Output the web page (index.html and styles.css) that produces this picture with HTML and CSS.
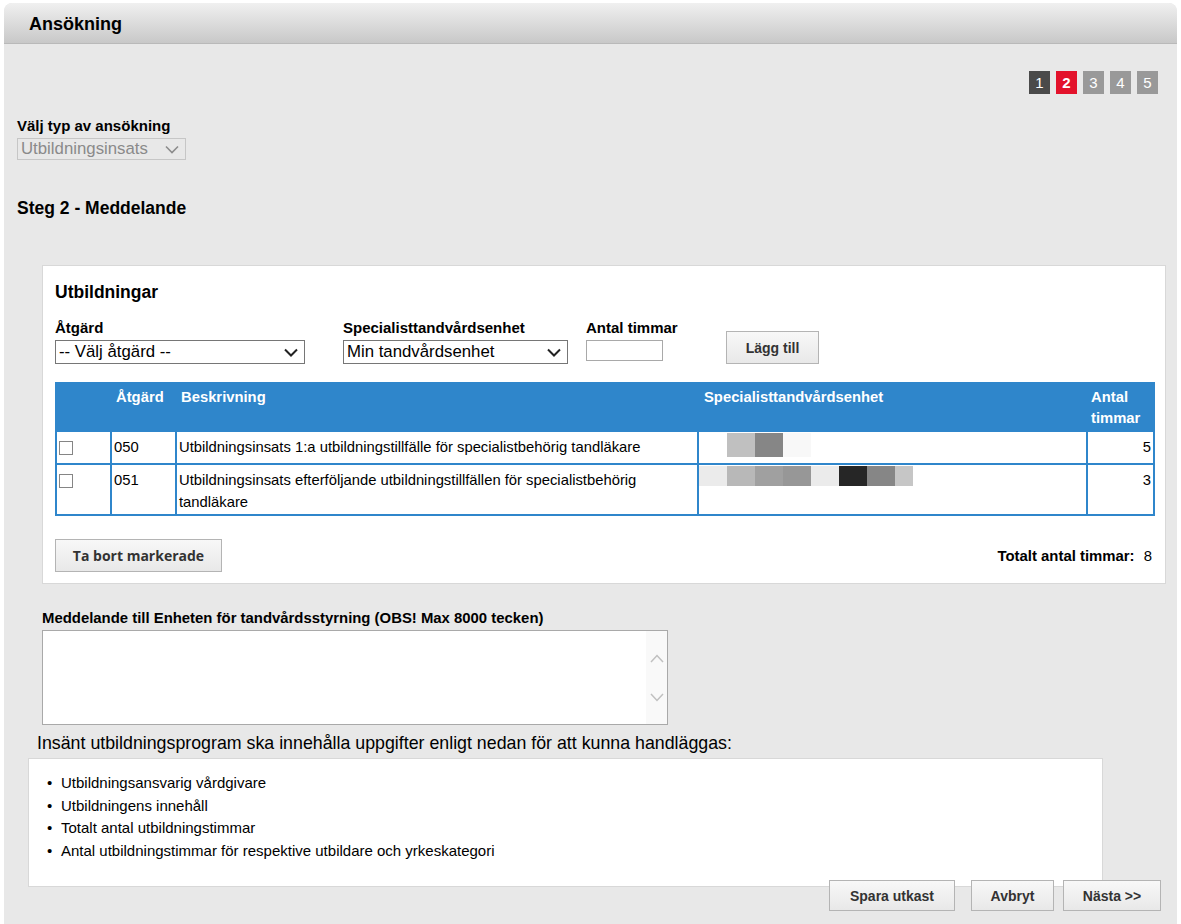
FILE: index.html
```html
<!DOCTYPE html>
<html lang="sv">
<head>
    <meta charset="UTF-8">
    <title>Ansökning</title>
    <link rel="stylesheet" href="styles.css">
</head>
<body>
    <div class="page">
        <header class="page-header">
            <h1>Ansökning</h1>
        </header>

        <div class="content">
            <div class="steps">
                <span class="step done">1</span>
                <span class="step active">2</span>
                <span class="step">3</span>
                <span class="step">4</span>
                <span class="step">5</span>
            </div>

            <div class="field-label">Välj typ av ansökning</div>
            <div class="select disabled type-select">
                <span>Utbildningsinsats</span>
                <svg width="14" height="9" viewBox="0 0 14 9"><path d="M1 1.5 L7 7.5 L13 1.5" fill="none" stroke="#8c8c8c" stroke-width="1.6"/></svg>
            </div>

            <h2 class="step-title">Steg 2 - Meddelande</h2>

            <div class="panel">
                <h3>Utbildningar</h3>

                <div class="form-row">
                    <div class="form-group group-action">
                        <div class="field-label">Åtgärd</div>
                        <div class="select action-select">
                            <span>-- Välj åtgärd --</span>
                            <svg width="14" height="9" viewBox="0 0 14 9"><path d="M1 1.5 L7 7.5 L13 1.5" fill="none" stroke="#222" stroke-width="2"/></svg>
                        </div>
                    </div>
                    <div class="form-group group-unit">
                        <div class="field-label">Specialisttandvårdsenhet</div>
                        <div class="select unit-select">
                            <span>Min tandvårdsenhet</span>
                            <svg width="14" height="9" viewBox="0 0 14 9"><path d="M1 1.5 L7 7.5 L13 1.5" fill="none" stroke="#222" stroke-width="2"/></svg>
                        </div>
                    </div>
                    <div class="form-group group-hours">
                        <div class="field-label">Antal timmar</div>
                        <div class="text-input"></div>
                    </div>
                    <button class="button add-button">Lägg till</button>
                </div>

                <table class="grid">
                    <colgroup>
                        <col class="col-check">
                        <col class="col-code">
                        <col class="col-desc">
                        <col class="col-unit">
                        <col class="col-hours">
                    </colgroup>
                    <thead>
                        <tr>
                            <th></th>
                            <th>Åtgärd</th>
                            <th>Beskrivning</th>
                            <th>Specialisttandvårdsenhet</th>
                            <th>Antal timmar</th>
                        </tr>
                    </thead>
                    <tbody>
                        <tr>
                            <td class="check-cell"><span class="checkbox"></span></td>
                            <td>050</td>
                            <td>Utbildningsinsats 1:a utbildningstillfälle för specialistbehörig tandläkare</td>
                            <td class="blur-cell">
                                <div class="blur tall">
                                    <span class="px b0"></span><span class="px b2"></span><span class="px b5"></span><span class="px b9"></span>
                                </div>
                            </td>
                            <td class="num">5</td>
                        </tr>
                        <tr>
                            <td class="check-cell"><span class="checkbox"></span></td>
                            <td>051</td>
                            <td>Utbildningsinsats efterföljande utbildningstillfällen för specialistbehörig tandläkare</td>
                            <td class="blur-cell">
                                <div class="blur">
                                    <span class="px b8"></span><span class="px b3"></span><span class="px b4"></span><span class="px b6"></span><span class="px b8"></span><span class="px b7"></span><span class="px b5"></span><span class="px b1 half"></span>
                                </div>
                            </td>
                            <td class="num">3</td>
                        </tr>
                    </tbody>
                </table>

                <div class="panel-footer">
                    <button class="button remove-button">Ta bort markerade</button>
                    <div class="total"><strong>Totalt antal timmar:</strong> <span>8</span></div>
                </div>
            </div>

            <div class="message-label">Meddelande till Enheten för tandvårdsstyrning (OBS! Max 8000 tecken)</div>
            <div class="textarea">
                <div class="textarea-body"></div>
                <div class="scrollbar">
                    <svg width="14" height="9" viewBox="0 0 14 9"><path d="M1 8 L7 1.5 L13 8" fill="none" stroke="#c0c0c0" stroke-width="1.5"/></svg>
                    <svg width="14" height="9" viewBox="0 0 14 9"><path d="M1 1 L7 7.5 L13 1" fill="none" stroke="#c0c0c0" stroke-width="1.5"/></svg>
                </div>
            </div>

            <p class="info-text">Insänt utbildningsprogram ska innehålla uppgifter enligt nedan för att kunna handläggas:</p>
            <div class="info-box">
                <ul>
                    <li>Utbildningsansvarig vårdgivare</li>
                    <li>Utbildningens innehåll</li>
                    <li>Totalt antal utbildningstimmar</li>
                    <li>Antal utbildningstimmar för respektive utbildare och yrkeskategori</li>
                </ul>
            </div>

            <div class="actions">
                <button class="button save-button">Spara utkast</button>
                <button class="button cancel-button">Avbryt</button>
                <button class="button next-button">Nästa &gt;&gt;</button>
            </div>
        </div>
    </div>
</body>
</html>
```

FILE: styles.css
```css
body {
    margin: 0;
    padding: 0;
    background-color: #ffffff;
    color: #000;
    font-family: "Liberation Sans", Arial, sans-serif;
    font-size: 15px;
}
.page {
    margin: 3px 4px 0 4px;
    background-color: #e8e8e8;
    border-radius: 8px 8px 0 0;
    height: 921px;
    overflow: hidden;
}
.page-header {
    height: 37px;
    padding: 3px 0 0 25px;
    border-bottom: 1px solid #b9b9b9;
    border-radius: 8px 8px 0 0;
    background: linear-gradient(#f0f0f0, #c8c8c8);
}
.page-header h1 {
    margin: 0;
    font-size: 18px;
    line-height: 37px;
}
.content {
    padding: 27px 19px 0 13px;
}
.steps {
    display: flex;
    justify-content: flex-end;
    gap: 6px;
}
.step {
    width: 21px;
    height: 23px;
    background-color: #999999;
    color: #fff;
    font-size: 15px;
    line-height: 23px;
    text-align: center;
}
.step.done {
    background-color: #4a4a4a;
}
.step.active {
    background-color: #e3122b;
    font-weight: bold;
}
.field-label {
    font-weight: bold;
    font-size: 15px;
    line-height: 16px;
    white-space: nowrap;
}
.content > .field-label {
    margin-top: 23px;
    line-height: 17px;
}
.select {
    display: flex;
    align-items: center;
    justify-content: space-between;
    box-sizing: border-box;
    border: 1px solid #767676;
    background-color: #fff;
    font-size: 16.8px;
    padding: 0 6px 0 3px;
}
.select.disabled {
    border-color: #c6c6c6;
    background-color: #e8e8e8;
    color: #8a8a8a;
}
.type-select {
    margin-top: 4px;
    width: 169px;
    height: 22px;
}
.step-title {
    margin: 38px 0 0 0;
    font-size: 17.5px;
    line-height: 20px;
}
.panel {
    margin: 47px 0 0 25px;
    width: 1098px;
    background-color: #fff;
    border: 1px solid #d8d8d8;
    padding: 16px 12px 11px 12px;
}
.panel h3 {
    margin: 0;
    font-size: 17.5px;
    line-height: 20px;
}
.form-row {
    display: flex;
    margin-top: 18px;
}
.form-group .select,
.form-group .text-input {
    margin-top: 4px;
}
.group-action {
    width: 250px;
    margin-right: 38px;
}
.group-unit {
    width: 225px;
    margin-right: 18px;
}
.group-hours {
    width: 77px;
    margin-right: 63px;
}
.action-select,
.unit-select {
    height: 24px;
}
.text-input {
    box-sizing: border-box;
    width: 77px;
    height: 21px;
    border: 1px solid #a9a9a9;
    background-color: #fff;
}
.button {
    box-sizing: border-box;
    background: linear-gradient(#f8f8f8, #e8e8e8);
    border: 1px solid #b4b4b4;
    color: #333;
    font-family: "Liberation Sans", Arial, sans-serif;
    font-weight: bold;
    font-size: 14px;
    cursor: pointer;
    padding: 0;
}
.add-button {
    margin-top: 11px;
    width: 93px;
    height: 33px;
}
.grid {
    margin-top: 18px;
    width: 1098px;
    table-layout: fixed;
    border-collapse: collapse;
    font-size: 14.8px;
}
.col-check { width: 55px; }
.col-code { width: 65px; }
.col-desc { width: 522px; }
.col-unit { width: 389px; }
.col-hours { width: 67px; }
.grid th {
    background-color: #2f86cb;
    color: #fff;
    border: 2px solid #2f86cb;
    text-align: left;
    vertical-align: top;
    padding: 3px 4px 1px 4px;
    line-height: 21px;
}
.grid th:nth-child(4) {
    padding-left: 5px;
}
.grid th:last-child {
    padding-left: 3px;
}
.grid td {
    border: 2px solid #2f86cb;
    vertical-align: top;
    padding: 4px 2px 1px 2px;
    line-height: 22px;
}
.grid td.check-cell {
    padding: 0;
}
.checkbox {
    display: block;
    box-sizing: border-box;
    width: 14px;
    height: 14px;
    margin: 9px 0 8px 2px;
    border: 1px solid #858585;
    background-color: #fff;
}
.grid td.num {
    text-align: right;
}
.grid td.blur-cell {
    padding: 1px 0 0 0;
}
.blur {
    display: flex;
    height: 20px;
}
.blur.tall {
    height: 24px;
}
.px {
    width: 28px;
}
.px.half {
    width: 18px;
}
.b0 { background-color: #ffffff; }
.b1 { background-color: #c6c6c6; }
.b2 { background-color: #c0c0c0; }
.b3 { background-color: #b8b8b8; }
.b4 { background-color: #a0a0a0; }
.b5 { background-color: #868686; }
.b6 { background-color: #979797; }
.b7 { background-color: #262626; }
.b8 { background-color: #ebebeb; }
.b9 { background-color: #f8f8f8; }
.panel-footer {
    display: flex;
    justify-content: space-between;
    align-items: center;
    margin-top: 23px;
}
.remove-button {
    width: 167px;
    height: 33px;
    font-family: "Open Sans", sans-serif;
    font-size: 14px;
}
.total {
    font-size: 14.9px;
    padding-right: 1px;
}
.total span {
    margin-left: 5px;
}
.message-label {
    margin: 26px 0 0 25px;
    font-weight: bold;
    font-size: 14.9px;
    line-height: 16px;
}
.textarea {
    display: flex;
    box-sizing: border-box;
    margin: 4px 0 0 25px;
    width: 626px;
    height: 95px;
    border: 1px solid #a9a9a9;
    background-color: #fff;
}
.textarea-body {
    flex: 1;
}
.scrollbar {
    width: 21px;
    background-color: #f9f9f9;
    display: flex;
    flex-direction: column;
    align-items: center;
    padding-top: 23px;
    gap: 30px;
}
.info-text {
    margin: 9px 0 0 20px;
    font-size: 17.8px;
    line-height: 18px;
}
.info-box {
    margin: 6px 0 0 11px;
    width: 1073px;
    height: 127px;
    background-color: #fff;
    border: 1px solid #d8d8d8;
}
.info-box ul {
    list-style: none;
    margin: 0;
    padding: 13px 0 0 18px;
}
.info-box li {
    font-size: 15px;
    line-height: 22.5px;
}
.info-box li::before {
    content: "•";
    display: inline-block;
    width: 14px;
}
.actions {
    display: flex;
    justify-content: flex-end;
    margin-top: -7px;
}
.actions .button {
    height: 31px;
}
.save-button {
    width: 126px;
    margin-right: 16px;
}
.cancel-button {
    width: 83px;
    margin-right: 9px;
}
.next-button {
    width: 98px;
    margin-right: -3px;
}
```
